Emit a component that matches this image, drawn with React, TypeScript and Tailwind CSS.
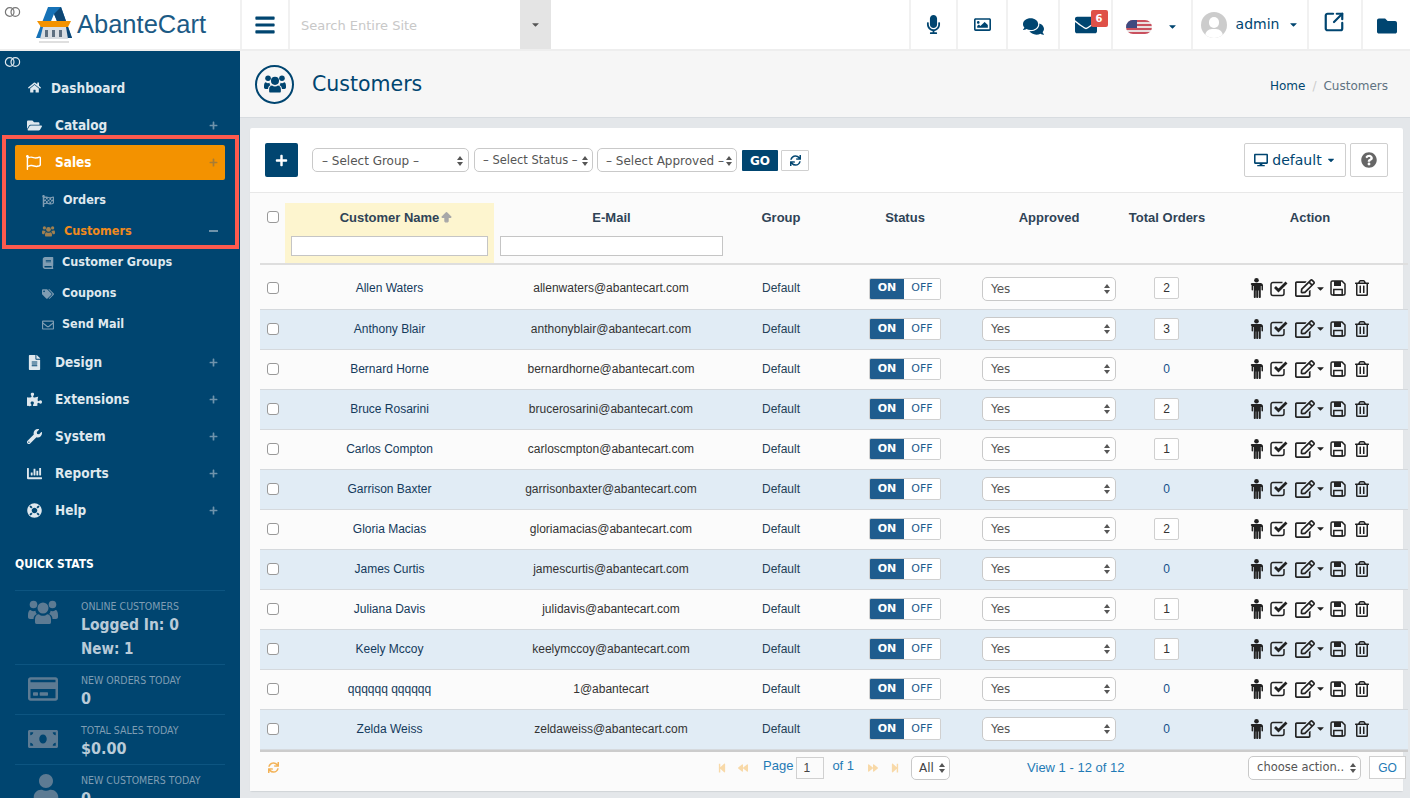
import {
  FaBars,
  FaBook,
  FaCaretDown,
  FaChartBar,
  FaComments,
  FaDesktop,
  FaEnvelope,
  FaFileAlt,
  FaFlagCheckered,
  FaFolder,
  FaFolderOpen,
  FaHome,
  FaLifeRing,
  FaMicrophone,
  FaMoneyBill,
  FaPlus,
  FaPuzzlePiece,
  FaQuestionCircle,
  FaRegCreditCard,
  FaRegEdit,
  FaRegEnvelope,
  FaRegFlag,
  FaRegImage,
  FaRegTrashAlt,
  FaSync,
  FaTags,
  FaUser,
  FaWrench,
  FaStepBackward,
  FaStepForward,
  FaBackward,
  FaForward,
} from 'react-icons/fa'
import { ArrowBigUp, SquareArrowOutUpRight } from 'lucide-react'
import type { ReactNode } from 'react'

const customers = [
  ['Allen Waters', 'allenwaters@abantecart.com', 2],
  ['Anthony Blair', 'anthonyblair@abantecart.com', 3],
  ['Bernard Horne', 'bernardhorne@abantecart.com', 0],
  ['Bruce Rosarini', 'brucerosarini@abantecart.com', 2],
  ['Carlos Compton', 'carloscmpton@abantecart.com', 1],
  ['Garrison Baxter', 'garrisonbaxter@abantecart.com', 0],
  ['Gloria Macias', 'gloriamacias@abantecart.com', 2],
  ['James Curtis', 'jamescurtis@abantecart.com', 0],
  ['Juliana Davis', 'julidavis@abantecart.com', 1],
  ['Keely Mccoy', 'keelymccoy@abantecart.com', 1],
  ['qqqqqq qqqqqq', '1@abantecart', 0],
  ['Zelda Weiss', 'zeldaweiss@abantecart.com', 0],
] as const

const columns = 'grid w-[1148px] grid-cols-[25px_209px_234px_106px_142px_146px_90px_196px]'

function Rings({ className }: { className: string }) {
  return (
    <svg className={className} width="17" height="10" viewBox="0 0 17 10" fill="none" stroke="currentColor" strokeWidth="1.2">
      <circle cx="5.7" cy="5" r="4.3" />
      <circle cx="11.3" cy="5" r="4.3" />
    </svg>
  )
}

function UsersIcon({ size }: { size: number }) {
  return (
    <svg width={size} height={size * 0.8} viewBox="0 0 30 24" fill="currentColor">
      <circle cx="15" cy="8" r="5.5" />
      <path d="M8.5 24c-1 0-1.5-.8-1.5-2v-3c0-3 2-4.800 4-4.800 1 1 2.400 1.500 4 1.500s3-.5 4-1.500c2 0 4 1.800 4 4.800v3c0 1.200-.5 2-1.500 2z" />
      <circle cx="5.500" cy="4.500" r="3.800" />
      <circle cx="24.500" cy="4.500" r="3.800" />
      <path d="M0 15c0-3 1-5 2.500-5 1 .8 2 1.200 3 1.200.8 0 1.500-.2 2-.5 0 1.500.7 2.800 1.500 3.300-2 .8-3.500 2.500-3.500 5H2c-1.200 0-2-1-2-2z" />
      <path d="M30 15c0-3-1-5-2.500-5-1 .8-2 1.200-3 1.200-.8 0-1.500-.2-2-.5 0 1.500-.7 2.800-1.500 3.300 2 .8 3.500 2.500 3.500 5H28c1.200 0 2-1 2-2z" />
    </svg>
  )
}

function ManIcon() {
  return (
    <svg width="13" height="20" viewBox="0 0 13 20" fill="currentColor">
      <circle cx="6.500" cy="2.300" r="2.300" />
      <path d="M2.300 5h8.400c1.200 0 2.300 1 2.300 2.300v4.500c0 .9-1.500.9-1.500 0V8h-.7v11c0 1.300-2 1.300-2 0v-6.500h-.6V19c0 1.300-2 1.300-2 0v-6.500h-.4V19c0 1.300-2 1.300-2 0V8h-.7v3.800c0 .9-1.500.9-1.500 0V7.300C0 6 1.100 5 2.300 5z" />
    </svg>
  )
}

function CheckIcon() {
  return (
    <svg width="18" height="17" viewBox="0 0 18 17" fill="none" stroke="currentColor">
      <path d="M14 9v4.500a2 2 0 0 1-2 2H3a2 2 0 0 1-2-2V4.500a2 2 0 0 1 2-2h9.500" strokeWidth="1.500" />
      <path d="M5 7l3.500 3.500L16.500 2.500" strokeWidth="2.800" />
    </svg>
  )
}

function SaveIcon() {
  return (
    <svg width="16" height="16" viewBox="0 0 16 16" fill="none" stroke="currentColor" strokeWidth="1.500">
      <path d="M1 2.500A1.500 1.500 0 0 1 2.500 1H12l3 3v9.500a1.500 1.500 0 0 1-1.500 1.500h-11A1.500 1.500 0 0 1 1 13.500z" />
      <rect x="4" y="1" width="7" height="5" fill="currentColor" stroke="none" />
      <rect x="3.800" y="9.500" width="8.400" height="5.500" />
    </svg>
  )
}

function Logo() {
  return (
    <svg width="38" height="40" viewBox="0 0 38 40">
      <path d="M13 2h13l11 31h-8L19 9 9 33H1z" fill="#1672b7" />
      <path d="M19 9l10 24h8L26 2z" fill="#0d4674" />
      <path d="M2 16h34l-3 6H6z" fill="#f39200" />
      <path d="M8 22h23l2 12H5z" fill="#d9dde2" />
      <path d="M10 25h3v7h-3zM17 25h3v7h-3zM24 25h3v7h-3z" fill="#5e6f80" />
      <path d="M4 37h30" stroke="#d5d5d5" strokeWidth="1.500" />
    </svg>
  )
}

function Arrows() {
  return (
    <span className="flex shrink-0 flex-col gap-[2px]">
      <span className="h-0 w-0 border-x-[3px] border-b-[4px] border-x-transparent border-b-[#555]" />
      <span className="h-0 w-0 border-x-[3px] border-t-[4px] border-x-transparent border-t-[#555]" />
    </span>
  )
}

function SelectBox({ label, className }: { label: string; className: string }) {
  return (
    <div className={`flex h-[24px] shrink-0 items-center justify-between rounded-[5px] border border-[#c9c9c9] bg-white text-[#555] ${className}`}>
      <span className="whitespace-nowrap">{label}</span>
      <Arrows />
    </div>
  )
}

function NavItem({ icon, label, labelClass = 'pl-[55px]', plus = true }: { icon: ReactNode; label: string; labelClass?: string; plus?: boolean }) {
  return (
    <div className={`relative flex h-[37px] items-center justify-between pr-[22px] font-['DejaVu_Sans_Condensed','DejaVu_Sans',sans-serif] text-[13.5px] font-bold text-[#dfe8ee] ${labelClass}`}>
      <span className="absolute left-[25px] top-[11px] flex w-[18px] justify-center text-[15px]">{icon}</span>
      <span>{label}</span>
      {plus && <span className="text-[9px] text-[#6f93ab]"><FaPlus /></span>}
    </div>
  )
}

function SubItem({ icon, label, active, labelClass }: { icon: ReactNode; label: string; active?: boolean; labelClass?: string }) {
  return (
    <div className={`flex h-[31px] items-center pt-[2px] font-['DejaVu_Sans_Condensed','DejaVu_Sans',sans-serif] text-[12.5px] font-bold ${active ? 'text-[#f08a1d]' : 'text-[#dfe8ee]'}`}>
      <span className={`flex w-[62px] justify-start pl-[42px] text-[12px] ${active ? 'text-[#a08050]' : 'text-[#7f9db3]'}`}>{icon}</span>
      <span className={labelClass}>{label}</span>
    </div>
  )
}

function Stat({ icon, title, children, className }: { icon: ReactNode; title: string; children: ReactNode; className: string }) {
  return (
    <div className={`flex border-t border-[#0d5581] ${className}`}>
      <span className="flex w-[66px] shrink-0 pl-[13px] pt-[9px] text-[#5d7b93]">{icon}</span>
      <div className="pt-[8px]">
        <div className="whitespace-nowrap text-[10.5px] leading-[14px] text-[#7f9db3]">{title}</div>
        {children}
      </div>
    </div>
  )
}

function Sidebar() {
  return (
    <aside className="relative h-[747px] w-[240px] shrink-0 overflow-hidden bg-[#004570] pt-[19px] font-['DejaVu_Sans_Condensed','DejaVu_Sans',sans-serif]">
      <Rings className="absolute left-[4px] top-[6px] text-[#dfe8ee]" />
      <NavItem icon={<span className="text-[13px]"><FaHome /></span>} label="Dashboard" labelClass="pl-[51px]" plus={false} />
      <NavItem icon={<FaFolderOpen />} label="Catalog" />
      <div className="mx-[15px] my-px flex h-[35px] items-center justify-between rounded-[2px] bg-[#f39200] pr-[7px] text-[13.5px] font-bold text-white">
        <div className="flex items-center">
          <span className="flex w-[40px] pl-[11px] text-[15px]"><FaRegFlag /></span>
          <span>Sales</span>
        </div>
        <span className="text-[9px] text-[#a77c35]"><FaPlus /></span>
      </div>
      <div className="mt-[4px]">
        <SubItem icon={<FaFlagCheckered />} label="Orders" labelClass="ml-[1px]" />
        <div className="relative">
          <SubItem icon={<UsersIcon size={13} />} label="Customers" active labelClass="ml-[2px]" />
          <span className="absolute right-[22px] top-[15px] h-[2px] w-[9px] bg-[#6f93ab]" />
        </div>
        <SubItem icon={<FaBook />} label="Customer Groups" />
        <SubItem icon={<FaTags />} label="Coupons" />
        <SubItem icon={<FaRegEnvelope />} label="Send Mail" />
      </div>
      <div className="mt-[5px]">
        <NavItem icon={<FaFileAlt />} label="Design" />
        <NavItem icon={<FaPuzzlePiece />} label="Extensions" />
        <NavItem icon={<FaWrench />} label="System" />
        <NavItem icon={<FaChartBar />} label="Reports" />
        <NavItem icon={<FaLifeRing />} label="Help" />
      </div>
      <div className="mx-[15px] mt-[26px]">
        <div className="h-[27px] text-[12px] font-bold leading-[18px] text-white">QUICK STATS</div>
        <Stat icon={<UsersIcon size={30} />} title="ONLINE CUSTOMERS" className="mt-[8px] h-[74px]">
          <div className="whitespace-nowrap text-[15.5px] font-bold leading-[24px] text-[#b9cbd8]">Logged In: 0</div>
          <div className="text-[15px] font-bold leading-[24px] text-[#b9cbd8]">New: 1</div>
        </Stat>
        <Stat icon={<span className="text-[30px]"><FaRegCreditCard /></span>} title="NEW ORDERS TODAY" className="h-[50px]">
          <div className="text-[16px] font-bold leading-[24px] text-[#b9cbd8]">0</div>
        </Stat>
        <Stat icon={<span className="text-[30px]"><FaMoneyBill /></span>} title="TOTAL SALES TODAY" className="h-[50px]">
          <div className="text-[16px] font-bold leading-[24px] text-[#b9cbd8]">$0.00</div>
        </Stat>
        <Stat icon={<span className="ml-[4px] text-[28px]"><FaUser /></span>} title="NEW CUSTOMERS TODAY" className="h-[50px]">
          <div className="text-[16px] font-bold leading-[24px] text-[#b9cbd8]">0</div>
        </Stat>
      </div>
    </aside>
  )
}

function HeaderCell({ width, children }: { width: string; children: ReactNode }) {
  return <div className={`flex h-full items-center justify-center border-l-2 border-[#f1f1f1] text-[#004570] ${width}`}>{children}</div>
}

function Header() {
  return (
    <header className="flex h-[51px] border-b-2 border-[#eeeeee] bg-white font-['DejaVu_Sans',sans-serif]">
      <div className="flex w-[240px] shrink-0 items-center gap-[4px] pl-[35px]">
        <Logo />
        <span className="font-['Liberation_Sans',sans-serif] text-[25.5px] text-[#1c5a85]">AbanteCart</span>
      </div>
      <div className="flex w-[50px] items-center justify-center border-x-2 border-[#f1f1f1] text-[22px] text-[#004570]"><FaBars /></div>
      <div className="flex w-[230px] items-center pl-[11px] pt-[3px] text-[13px] text-[#c8c8c8]">Search Entire Site</div>
      <div className="flex w-[31px] items-center justify-center bg-[#e4e4e4] text-[11px] text-[#555]"><FaCaretDown /></div>
      <div className="flex-1" />
      <HeaderCell width="w-[47px]"><span className="text-[19px]"><FaMicrophone /></span></HeaderCell>
      <HeaderCell width="w-[50px]"><span className="text-[17px]"><FaRegImage /></span></HeaderCell>
      <HeaderCell width="w-[52px]"><span className="mt-[3px] text-[21px]"><FaComments /></span></HeaderCell>
      <HeaderCell width="w-[53px]">
        <span className="relative text-[22px]">
          <FaEnvelope />
          <span className="absolute -right-[11px] -top-[4px] rounded-[2px] bg-[#df5148] px-[5px] text-[10px] font-bold leading-[17px] text-white">6</span>
        </span>
      </HeaderCell>
      <HeaderCell width="w-[80px]">
        <span className="mt-[4px] flex items-center gap-[15px]">
          <span className="h-[14px] w-[26px] overflow-hidden rounded-[7px] bg-[repeating-linear-gradient(180deg,#c9505e_0,#c9505e_2px,#eadfe0_2px,#eadfe0_4px)]">
            <span className="block h-[8px] w-[11px] bg-[#3e4a80]" />
          </span>
          <span className="text-[11px]"><FaCaretDown /></span>
        </span>
      </HeaderCell>
      <HeaderCell width="w-[116px]">
        <span className="flex items-center">
          <span className="relative mr-[9px] h-[26px] w-[26px] overflow-hidden rounded-full bg-[#cccccc]">
            <span className="absolute left-[8px] top-[5px] h-[11px] w-[10px] rounded-full bg-white" />
            <span className="absolute left-[4px] top-[17px] h-[14px] w-[18px] rounded-full bg-white" />
          </span>
          <span className="text-[14px]">admin</span>
          <span className="ml-[9px] text-[11px]"><FaCaretDown /></span>
        </span>
      </HeaderCell>
      <HeaderCell width="w-[54px]"><span className="-mt-[5px] -ml-[2px]"><SquareArrowOutUpRight size={22} strokeWidth={2.400} /></span></HeaderCell>
      <HeaderCell width="w-[49px]"><span className="mt-[2px] text-[20px]"><FaFolder /></span></HeaderCell>
    </header>
  )
}

function CustomerRow({ name, email, orders, index }: { name: string; email: string; orders: number; index: number }) {
  const rowHeight = index === 0 ? 'h-[45px] pt-[2px]' : 'h-[40px] pb-[2px]'
  return (
    <div className={`${columns} ${rowHeight} items-center border-b border-[#d5d9dd] text-[12px] text-[#333] ${index % 2 === 1 ? 'bg-[#e1ecf5]' : ''}`}>
      <span className="ml-[7px] h-[12px] w-[12px] rounded-[3px] border border-[#999] bg-white" />
      <span className="text-center text-[#143a5c]">{name}</span>
      <span className="text-center">{email}</span>
      <span className="text-center text-[#243f57]">Default</span>
      <div className="ml-[35px] mt-[1px] flex h-[22px] w-[72px] overflow-hidden rounded-[2px] border border-[#d0d0d0] font-['DejaVu_Sans',sans-serif] text-[11px] font-bold">
        <span className="flex w-[34px] items-center justify-center bg-[#1f5c8e] text-white">ON</span>
        <span className="flex flex-1 items-center justify-center bg-white font-normal text-[#1f5c8e]">OFF</span>
      </div>
      <SelectBox label="Yes" className="ml-[6px] mt-[1px] h-[20px] w-[134px] pl-[8px] pr-[5px] font-['DejaVu_Sans',sans-serif] text-[12px]" />
      <div className="flex justify-center pr-[1px]">
        {orders > 0 ? (
          <span className="flex h-[22px] w-[25px] items-center justify-center rounded-[2px] border border-[#cfcfcf] bg-white">{orders}</span>
        ) : (
          <span className="text-[#14508a]">0</span>
        )}
      </div>
      <div className="flex items-center pl-[38px] text-[#222]">
        <span className="w-[20px]"><ManIcon /></span>
        <span className="w-[25px]"><CheckIcon /></span>
        <span className="flex w-[35px] items-center text-[20px]"><FaRegEdit /><span className="text-[11px]"><FaCaretDown /></span></span>
        <span className="w-[24px]"><SaveIcon /></span>
        <span className="text-[16px]"><FaRegTrashAlt /></span>
      </div>
    </div>
  )
}

function Toolbar() {
  return (
    <div className="flex h-[65px] items-center border-b border-[#e8e8e8] pl-[15px] pr-[15px] font-['DejaVu_Sans',sans-serif]">
      <div className="mr-[14px] flex h-[34px] w-[33px] items-center justify-center rounded-[2px] bg-[#004570] text-[13px] text-white"><FaPlus /></div>
      <SelectBox label="– Select Group –" className="mr-[5px] w-[157px] pl-[9px] pr-[5px] pt-[1px] text-[12px]" />
      <SelectBox label="– Select Status –" className="mr-[4px] w-[119px] pl-[8px] pr-[4px] pt-[2px] text-[11.5px]" />
      <SelectBox label="– Select Approved –" className="mr-[5px] w-[140px] pl-[8px] pr-[4px] pt-[1px] text-[12px]" />
      <div className="mr-[3px] mt-[1px] flex h-[21px] w-[36px] items-center justify-center rounded-[1px] bg-[#004570] text-[12px] font-bold text-white">GO</div>
      <div className="mt-[1px] flex h-[21px] w-[28px] items-center justify-center rounded-[1px] border border-[#d0d0d0] text-[11px] text-[#004570]"><FaSync /></div>
      <div className="flex-1" />
      <div className="mr-[4px] flex h-[34px] w-[102px] items-center justify-center gap-[4px] rounded-[2px] border border-[#cfcfcf] text-[14px] text-[#004570]">
        <FaDesktop />
        <span>default</span>
        <span className="text-[10px]"><FaCaretDown /></span>
      </div>
      <div className="flex h-[34px] w-[38px] items-center justify-center rounded-[2px] border border-[#cfcfcf] text-[16px] text-[#666]"><FaQuestionCircle /></div>
    </div>
  )
}

function TableHead() {
  return (
    <div className={`${columns} h-[72px] border-b-2 border-[#dedede] text-[13px] font-bold text-[#2f4356]`}>
      <span className="ml-[7px] mt-[18px] h-[12px] w-[12px] rounded-[3px] border border-[#999] bg-white" />
      <div className="mt-[10px] h-[60px] bg-[#fdf5cf] px-[6px] pt-[5px] text-center">
        <div className="flex items-center justify-center gap-[1px] pl-[14px]">Customer Name<span className="text-[#a8a8a8]"><ArrowBigUp size={13} fill="currentColor" /></span></div>
        <div className="mt-[8px] h-[20px] border border-[#c5c5c5] bg-white" />
      </div>
      <div className="mt-[15px] pl-[6px] pr-[5px] text-center">
        E-Mail
        <div className="mt-[8px] h-[20px] border border-[#c5c5c5] bg-white" />
      </div>
      <span className="mt-[15px] text-center">Group</span>
      <span className="mt-[15px] text-center">Status</span>
      <span className="mt-[15px] text-center">Approved</span>
      <span className="mt-[15px] text-center">Total Orders</span>
      <span className="mt-[15px] text-center">Action</span>
    </div>
  )
}

function Pager() {
  return (
    <div className="flex h-[31px] w-[1148px] items-center whitespace-nowrap text-[13px] text-[#1f7ab5]">
      <span className="ml-[8px] text-[11px] text-[#f3b256]"><FaSync /></span>
      <div className="ml-[438px] flex items-center text-[10px] text-[#f8d9a8]">
        <span className="mr-[11px]"><FaStepBackward /></span>
        <span className="mr-[15px]"><FaBackward /></span>
      </div>
      <span className="-mt-[3px]">Page</span>
      <span className="ml-[3px] flex h-[22px] w-[28px] shrink-0 items-center border border-[#d0d0d0] pl-[6px] text-[12px] text-[#444]">1</span>
      <span className="-mt-[3px] ml-[8px]">of 1</span>
      <div className="ml-[14px] flex items-center text-[10px] text-[#f8d9a8]">
        <span className="mr-[12px]"><FaForward /></span>
        <span className="mr-[11px]"><FaStepForward /></span>
      </div>
      <SelectBox label="All" className="h-[20px] w-[39px] pl-[7px] pr-[4px] font-['DejaVu_Sans',sans-serif] text-[12px] !text-[#444]" />
      <span className="ml-[77px] w-[221px] shrink-0">View 1 - 12 of 12</span>
      <SelectBox label="choose action.." className="h-[20px] w-[113px] pl-[8px] pr-[4px] font-['DejaVu_Sans',sans-serif] text-[11.5px]" />
      <span className="ml-[8px] flex h-[23px] w-[37px] shrink-0 items-center justify-center border border-[#d0d0d0] bg-white text-[12px]">GO</span>
    </div>
  )
}

export default function App() {
  return (
    <div className="relative h-[798px] w-[1410px] overflow-hidden bg-[#e4e7ea] font-['Liberation_Sans',sans-serif]">
      <Rings className="absolute left-[4px] top-[7px] z-10 text-[#777]" />
      <Header />
      <div className="flex">
        <Sidebar />
        <main className="flex-1">
          <div className="flex h-[67px] items-center justify-between border-b border-[#d8dce0] bg-[#f6f6f6] pl-[15px] pr-[22px] font-['DejaVu_Sans',sans-serif]">
            <div className="flex items-center">
              <span className="mr-[18px] flex h-[39px] w-[39px] items-center justify-center rounded-full border-2 border-[#004570] text-[#004570]"><UsersIcon size={22} /></span>
              <h1 className="text-[20.5px] text-[#004570]">Customers</h1>
            </div>
            <div className="mt-[3px] text-[12px] text-[#004570]">
              Home<span className="mx-[7px] text-[#ccc]">/</span><span className="text-[#5f7382]">Customers</span>
            </div>
          </div>
          <div className="ml-[10px] mt-[10px] h-[663px] w-[1153px] rounded-[2px] bg-white shadow-[0_1px_1px_#d0d4d8]">
            <Toolbar />
            <div className="h-[598px] bg-[#fbfbfb] pl-[10px]">
              <TableHead />
              <div className="w-[1148px] border-b-2 border-[#cccccc]">
                {customers.map(([name, email, orders], i) => (
                  <CustomerRow key={name} name={name} email={email} orders={orders} index={i} />
                ))}
              </div>
              <Pager />
            </div>
          </div>
        </main>
      </div>
      <div className="pointer-events-none absolute left-[2px] top-[135px] h-[114px] w-[237px] border-[4px] border-[#fd5a4e]" />
    </div>
  )
}
